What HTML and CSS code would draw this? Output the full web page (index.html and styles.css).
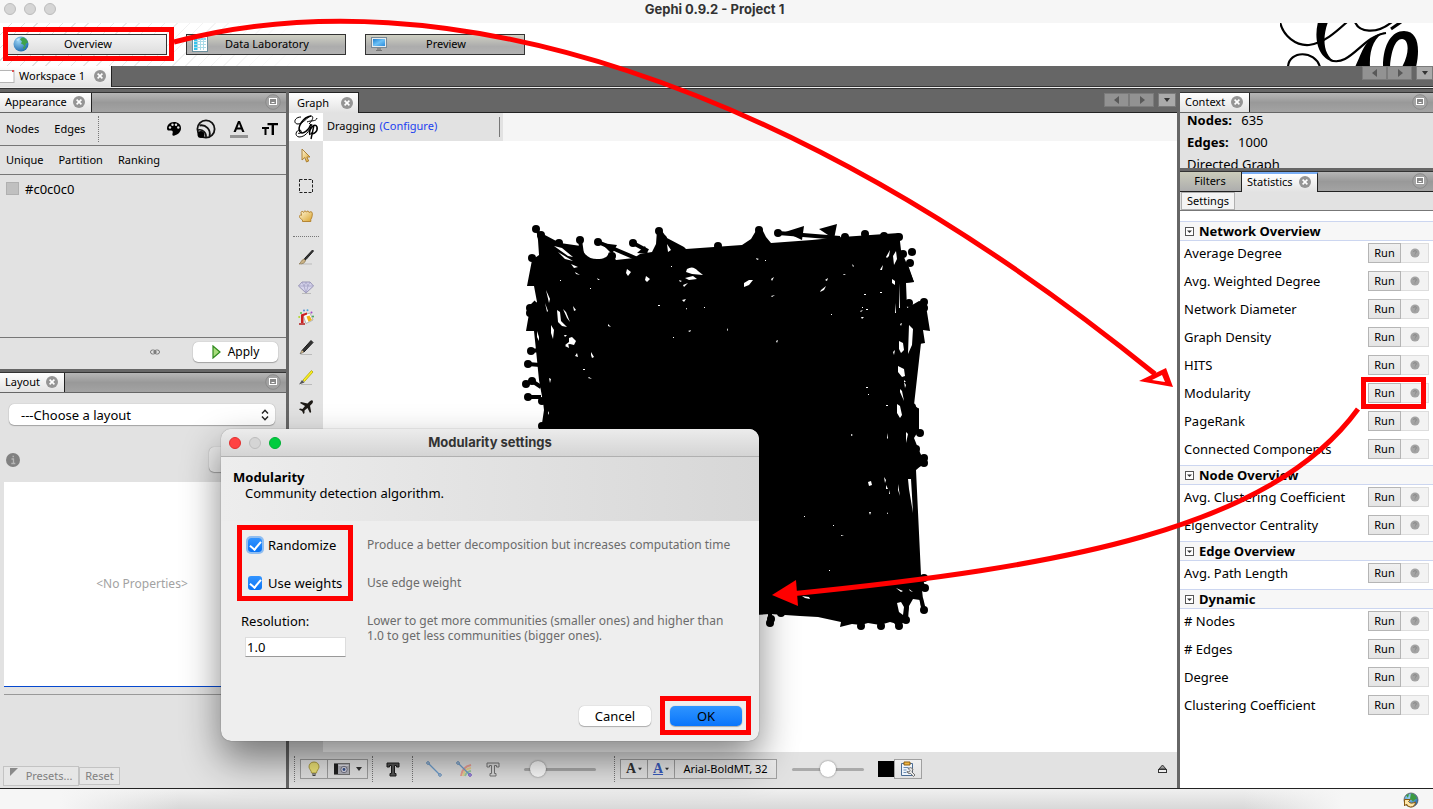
FILE: index.html
```html
<!DOCTYPE html>
<html lang="en">
<head>
<meta charset="utf-8">
<title>Gephi 0.9.2 - Project 1</title>
<link rel="stylesheet" href="styles.css">
</head>
<body>
<svg class="defs" aria-hidden="true">
  <defs>
    <linearGradient id="gold" x1="0" y1="0" x2="1" y2="1"><stop offset="0" stop-color="#fff6d8"/><stop offset="1" stop-color="#d9a32c"/></linearGradient>
    <radialGradient id="globeFill" cx=".35" cy=".3" r=".8"><stop offset="0" stop-color="#9ad4f5"/><stop offset="1" stop-color="#1461a8"/></radialGradient>
    <linearGradient id="screen" x1="0" y1="0" x2="1" y2="1"><stop offset="0" stop-color="#1d7fd0"/><stop offset=".5" stop-color="#6cc0f5"/><stop offset="1" stop-color="#2a8bdc"/></linearGradient>
    <symbol id="close" viewBox="0 0 12 12"><circle cx="6" cy="6" r="6" fill="#959595"/><path d="M3.6 3.6l4.8 4.8M8.4 3.6l-4.8 4.8" stroke="#fff" stroke-width="1.6"/></symbol>
    <symbol id="mini" viewBox="0 0 16 16"><circle cx="8" cy="8" r="7.3" fill="#a2a2a2" stroke="#8a8a8a"/><rect x="4.5" y="4.5" width="7" height="6" fill="#888" stroke="#fff"/><path d="M6.5 8.5h3" stroke="#fff"/></symbol>
    <symbol id="help" viewBox="0 0 10 10"><circle cx="5" cy="5" r="4.6" fill="#a3a3a3"/><path d="M3.6 4q0-1.4 1.4-1.4T6.4 4Q6.4 4.800 5 5.600M5 6.500v1" fill="none" stroke="#8a8a8a"/></symbol>
    <symbol id="left" viewBox="0 0 6 8"><path d="M5 0v8L0 4z" fill="#595959"/></symbol>
    <symbol id="right" viewBox="0 0 6 8"><path d="M1 0v8l5-4z" fill="#595959"/></symbol>
    <symbol id="down" viewBox="0 0 6 6"><path d="M0 1h6L3 5z" fill="#333"/></symbol>
    <symbol id="fold" viewBox="0 0 9 9"><rect x=".5" y=".5" width="8" height="8" fill="#fff" stroke="#555"/><path d="M2 3.500h5L4.500 6z" fill="#333"/></symbol>
  </defs>
</svg>

<div class="window">
  <header class="titlebar">
    <div class="lights"><span></span><span></span><span></span></div>
    <h1>Gephi 0.9.2 - Project 1</h1>
  </header>

  <nav class="perspectives">
    <button class="persp current" type="button">
      <svg viewBox="0 0 16 16" width="16" height="16"><circle cx="8" cy="8" r="7.500" fill="url(#globeFill)"/><path d="M9 1.500c3 0 5 2 6 5l-2 1-1 3-2-2-2-1 1-2-2-2zM10 11l3-1-2 4z" fill="#3fa24a"/><path d="M3 4l3-2 1 1-2 2z" fill="#bfe4fa"/></svg>
      <span>Overview</span>
    </button>
    <button class="persp" type="button">
      <svg viewBox="0 0 16 16" width="16" height="16"><rect x=".5" y=".5" width="15" height="15" fill="#fff" stroke="#6b8f9c"/><path d="M2 2h3v12H2z" fill="#35c4ec"/><path d="M5 2h9v2H5z" fill="#7fdcf5"/><path d="M2 5.500h12M2 8.500h12M2 11.500h12M5.500 2v12M8.500 2v12M11.500 2v12" stroke="#a9dbe8" fill="none"/></svg>
      <span>Data Laboratory</span>
    </button>
    <button class="persp" type="button">
      <svg viewBox="0 0 16 16" width="16" height="16"><rect x=".5" y="1.500" width="15" height="10" fill="#e8ecee" stroke="#7a8a96"/><rect x="2" y="3" width="12" height="7" fill="url(#screen)"/><path d="M6 12h4v2H6z" fill="#8b8b8b"/><path d="M5 14.500h6" stroke="#777"/></svg>
      <span>Preview</span>
    </button>
    <svg class="brand" viewBox="1280 23 140 43" aria-hidden="true">
      <g fill="none" stroke="#000" stroke-width="2.200">
        <path d="M1280 22C1283 36 1296 46 1309 45C1324 43 1336 32 1347 22"/>
        <path d="M1288 67C1289 50 1315 50 1320 67"/>
        <path d="M1355 22C1359 32 1376 35 1392 22"/>
        <path d="M1391 29L1401 22" stroke-width="3"/>
        <path d="M1330 60C1350 68 1362 36 1386 33"/>
      </g>
      <path d="M1318 22h10C1322 38 1323 56 1336 62C1320 61 1313 42 1318 22z"/>
      <path d="M1386 32C1374 36 1369 50 1370 67h-15C1362 54 1364 36 1386 32z"/>
      <path d="M1383 67C1383 44 1392 31 1404 31C1419 31 1420 50 1416 67h-14C1410 53 1409 39 1402 39C1395 39 1391 52 1390 67z"/>
    </svg>
  </nav>

  <div class="workspaces">
    <div class="tab ws"><svg viewBox="0 0 15 13" width="15" height="13"><rect x="-2" y=".5" width="16" height="12" fill="#fff" stroke="#b5b5b5"/><rect x="12" y="0" width="2" height="2" fill="#d55"/></svg>Workspace 1<svg class="x"><use href="#close"/></svg></div>
    <div class="navs">
      <button type="button" aria-label="Previous workspace"><svg width="6" height="8"><use href="#left"/></svg></button><button type="button" aria-label="Next workspace"><svg width="6" height="8"><use href="#right"/></svg></button><button class="drop" type="button" aria-label="Workspaces"><svg width="6" height="6"><use href="#down"/></svg></button>
    </div>
  </div>

  <main class="desk">
    <div class="col">
      <section class="panel appearance">
        <div class="head"><div class="tab">Appearance<svg class="x"><use href="#close"/></svg></div><svg class="mini"><use href="#mini"/></svg></div>
        <div class="modes">
          <a href="#">Nodes</a><a href="#">Edges</a><i class="dots"></i>
          <div class="kinds">
            <svg viewBox="0 0 16 16" width="16" height="16"><path d="M8 1C3.500 1 1 4 1 7.500C1 10 3 9.500 5 9.500C7 9.500 7 11 6.500 12.500C6 14.500 7 15 8.500 14.500C12 13.500 15 11 15 7C15 3.500 12 1 8 1z"/><g fill="#e2e2e2"><circle cx="4" cy="6.500" r="1.200"/><circle cx="6.500" cy="3.800" r="1.200"/><circle cx="10" cy="3.800" r="1.200"/><circle cx="12.300" cy="6.500" r="1.200"/></g></svg>
            <svg viewBox="0 0 20 20" width="20" height="20"><g fill="none" stroke="#111" stroke-width="1.800"><circle cx="10" cy="10" r="8.600"/><path d="M3.500 6.500a8.500 8.500 0 0 1 10 10.500"/></g><path d="M2 11a6.500 6.500 0 0 1 8 7.500" fill="none" stroke="#111" stroke-width="1.500"/><circle cx="5" cy="15.500" r="3.500"/></svg>
            <svg viewBox="0 0 18 18" width="18" height="18"><path d="M3.500 12L8 1h2l4.500 11h-2.300l-1-2.600H6.800l-1 2.600zM7.500 7.500h3L9 3.500z"/><path d="M0 15h18v3H0z" fill="#949494"/></svg>
            <svg viewBox="0 0 16 14" width="16" height="14"><path d="M0 5h7v2H4.500v6h-2V7H0zM5.500 1H16v2.200h-4V13H9.600V3.200H5.500z"/></svg>
          </div>
        </div>
        <div class="modes second"><a href="#">Unique</a><a href="#">Partition</a><a href="#">Ranking</a></div>
        <div class="swatch"><i></i>#c0c0c0</div>
        <div class="applybar">
          <svg viewBox="0 0 10 7" width="10" height="7"><g fill="none" stroke="#777"><rect x=".5" y="1" width="5" height="4" rx="2"/><rect x="4.500" y="1" width="5" height="4" rx="2"/><path d="M3 3h4"/></g></svg>
          <button class="mac" type="button"><svg viewBox="0 0 9 14" width="9" height="14"><path d="M1 1l7 6-7 6z" fill="#a8dc7c" stroke="#2f8a1e" stroke-width="1.200"/></svg>Apply</button>
        </div>
      </section>
      <section class="panel layout">
        <div class="head"><div class="tab">Layout<svg class="x"><use href="#close"/></svg></div><svg class="mini"><use href="#mini"/></svg></div>
        <div class="picker"><select aria-label="Layout"><option>---Choose a layout</option></select><svg viewBox="0 0 8 12" width="8" height="12"><path d="M1 4.500L4 1.300l3 3.200M1 7.500l3 3.200 3-3.200" fill="none" stroke="#222" stroke-width="1.400"/></svg></div>
        <div class="runrow"><svg viewBox="0 0 14 14" width="14" height="14"><circle cx="7" cy="7" r="7" fill="#818181"/><path d="M5.500 6h2v4.500M5.300 10.500h4M6.500 3.500h1.500" stroke="#b5b5b5" stroke-width="1.300" fill="none"/></svg><button class="mac off" type="button" aria-label="Run layout"></button></div>
        <div class="props">&lt;No Properties&gt;</div>
        <div class="desc"></div>
        <div class="presets"><button type="button" disabled><svg viewBox="0 0 8 8" width="8" height="8"><path d="M0 0h8L0 8z" fill="#8a8a8a"/></svg>Presets...</button><button type="button" disabled>Reset</button></div>
      </section>
    </div>

    <section class="graph">
      <div class="head plain"><div class="tab">Graph<svg class="x"><use href="#close"/></svg></div>
        <div class="navs"><button type="button" aria-label="Previous tab"><svg width="6" height="8"><use href="#left"/></svg></button><button type="button" aria-label="Next tab"><svg width="6" height="8"><use href="#right"/></svg></button><button class="drop" type="button" aria-label="Tabs"><svg width="6" height="6"><use href="#down"/></svg></button></div>
      </div>
      <div class="dragbar">
        <svg class="gp" viewBox="0 0 34 28" width="34" height="28"><g fill="none" stroke="#000" stroke-width="1"><path d="M12 4C5 4 4 11 9 11C14 11 18 4 22 3C25 3 24 7 20 11"/><path d="M22 3C14 4 8 14 11 19C14 22 20 17 22 11" stroke-width="1.500"/><path d="M23 11C20 19 16 24 10 24C5 23 7 17 11 17C14 18 11 22 9 20"/><path d="M21 22C19 16 26 9 28 14C29 18 25 22 22 20" stroke-width="1.600"/><path d="M25 12L22 26" stroke-width="1.400"/><path d="M18 9C22 7 27 9 28 5"/></g></svg>
        <div class="drag"><span>Dragging</span><a href="#">(Configure)</a><i></i></div>
      </div>
      <div class="stage">
        <div class="tools">
          <button type="button" aria-label="Select"><svg viewBox="0 0 16 16" width="16" height="16"><path d="M4 1v11l2.800-2.500L8.500 14l2.200-1-1.800-4H12z" fill="url(#gold)" stroke="#a6782a" stroke-width=".9"/></svg></button>
          <button type="button" aria-label="Rectangle selection"><svg viewBox="0 0 16 16" width="16" height="16"><rect x="1.500" y="1.500" width="13" height="13" fill="none" stroke="#222" stroke-dasharray="3 1.500"/></svg></button>
          <button type="button" aria-label="Drag"><svg viewBox="0 0 16 16" width="16" height="16"><path d="M4.500 13.500V12C3 11 1.500 10 1.500 8.500C1.500 7 2.500 6.800 3.500 7.300L3 4.500C3.300 3 5 3 5.600 4.500C5.800 2.500 8 2.500 8.400 4.200C8.800 2.600 11 2.700 11.200 4.600C12 3.200 14.300 3.500 14.300 5.300C14.300 8 14 9.500 12.800 11.500V13.500z" fill="url(#gold)" stroke="#b07d27" stroke-width=".9"/></svg></button>
          <i></i>
          <button type="button" aria-label="Painter"><svg viewBox="0 0 16 16" width="16" height="16"><path d="M3 15h11" stroke="#bbb"/><path d="M14.500 1L7 9l-1.500 3L8 10.500 15.500 2z" fill="#333" stroke="#222"/><path d="M6 10C3 11 3 14 1 15c4 0 6-1 6.500-3.500z" fill="#c9b184" stroke="#7d6b45" stroke-width=".6"/></svg></button>
          <button type="button" aria-label="Sizer"><svg viewBox="0 0 16 16" width="16" height="16"><path d="M4 14.500h9" stroke="#bbb"/><path d="M4 3h8l3.500 4L8 14 .5 7z" fill="#d6d4ec" stroke="#8884aa" stroke-width=".8"/><path d="M.5 7h15M4 3l2 4 2 7 2-7 2-4M6 7l2-4 2 4" fill="none" stroke="#a5a2c4" stroke-width=".8"/></svg></button>
          <button type="button" aria-label="Brush"><svg viewBox="0 0 16 16" width="16" height="16"><circle cx="3" cy="4" r="1" fill="#4ac54a"/><circle cx="6" cy="1.500" r="1" fill="#5588d8"/><circle cx="9.500" cy="1.200" r="1" fill="#4ba8d8"/><circle cx="13.500" cy="3.500" r="1" fill="#a345c8"/><circle cx="15" cy="7.500" r="1" fill="#38a858"/><circle cx="1.200" cy="8" r="1" fill="#b0d82a"/><path d="M5 6l7-2 3 7-7 3.500z" fill="#fafafa" stroke="#999" stroke-width=".7"/><path d="M3 5.500l6-2v2L5.500 7v7H3z" fill="#cc1f1f"/><path d="M8.500 7.500l3-1L14 11l-3.500 1.800z" fill="#eeb21c"/><path d="M1 15h6" stroke="#b51b1b" stroke-width="1.500"/></svg></button>
          <button type="button" aria-label="Node pencil"><svg viewBox="0 0 16 16" width="16" height="16"><path d="M3 15.500h11" stroke="#bbb"/><path d="M4 11.500L13 1.500l2 2L6 13z" fill="#333" stroke="#1c1c1c"/><path d="M4 11l2 2-4 2z" fill="#dcbf8a" stroke="#444" stroke-width=".5"/></svg></button>
          <button type="button" aria-label="Edge pencil"><svg viewBox="0 0 16 16" width="16" height="16"><path d="M3 15.500h11" stroke="#bbb"/><path d="M5 11L13.500 1.500l1.500 1.500L6.500 12.500z" fill="#fbf01c" stroke="#b3a80c" stroke-width=".8"/><path d="M4 11l2.500 2.500L1 15.500z" fill="#555"/></svg></button>
          <button type="button" aria-label="Shortest path"><svg viewBox="0 0 16 16" width="16" height="16"><path d="M14.500 1.500c-1-.8-2 0-3 1L9.500 4.500 3 3 2 4l5 3-2.500 3L2 9.500 1 10.500l3 1.500 1.500 3 1-1L6.500 11.500 9.500 9l2.500 5 1.200-1L12 6.800l2-2c1-1 1.300-2.500.5-3.300z" fill="#1d1a16"/></svg></button>
        </div>
        <svg class="net" viewBox="323 141 854 611" preserveAspectRatio="xMidYMid slice" role="img" aria-label="Network graph">
          <path d="M536 229L543 234L560 243L581 246C584 256 590 259 597 259C606 259 608 256 609 252L613 256L616 260L634 258L640 254L652 252L656 244L657 230L662 231L667 238L684 247L686 249L742 245L751 239L757 229H762L766 237L771 243L812 240L842 237L899 233L901 250L906 262L914 282L906 283L907 308L919 301L924 302L927 312L930 331L923 330L925 343L921 343L914 405L919 409V430L914 438L918 448L922 457L922 465L916 470L921 575L926 588L922 590L924 608H921L920 600L913 599L909 606L907 618L901 625L890 622L880 625L868 623L861 625L852 624L840 627L841 622L818 617L800 616L770 614L755 615L600 600L541 430L544 410L543 402L539 380L536 350L534 331H526L530 308L537 302L534 286H527L532 260L539 255L538 240z"/>
          <g stroke="#000" stroke-width="4" fill="none"><path d="M598 242L640 260M633 243L648 251M580 240L582 254M778 233L840 238M528 364L540 365M526 384L532 381L541 387M528 397L541 397M530 308L536 302M531 351L540 350M909 303L900 303M924 463L914 466M906 620L907 606M899 627L888 610M924 610L921 598M770 622V614"/></g>
          <path d="M601 243L617 245L612 254zM645 246L648 254L637 253zM785 232L804 226L802 240zM819 229L837 224L834 239zM907 262L914 282L900 283zM920 340L925 343L914 345zM914 412L919 408V430z"/>
          <g>
            <circle cx="536" cy="229" r="4"/><circle cx="541" cy="235" r="4"/><circle cx="559" cy="243" r="4"/><circle cx="580" cy="240" r="4"/><circle cx="598" cy="242" r="4"/><circle cx="633" cy="243" r="4"/><circle cx="612" cy="256" r="4"/><circle cx="659" cy="231" r="4"/><circle cx="663" cy="239" r="4"/><circle cx="532" cy="258" r="4"/><circle cx="530" cy="308" r="4"/><circle cx="530" cy="313" r="4"/><circle cx="531" cy="351" r="4"/><circle cx="528" cy="364" r="4"/><circle cx="526" cy="384" r="4"/><circle cx="532" cy="381" r="4"/><circle cx="528" cy="397" r="4"/><circle cx="542" cy="426" r="4"/><circle cx="542" cy="401" r="4"/><circle cx="718" cy="246" r="4"/><circle cx="759" cy="230" r="4"/><circle cx="778" cy="233" r="4"/><circle cx="845" cy="237" r="4"/><circle cx="865" cy="234" r="4"/><circle cx="884" cy="236" r="4"/><circle cx="899" cy="237" r="4"/><circle cx="903" cy="254" r="4"/><circle cx="912" cy="252" r="4"/><circle cx="910" cy="263" r="4"/><circle cx="909" cy="303" r="4"/><circle cx="924" cy="302" r="4"/><circle cx="924" cy="308" r="4"/><circle cx="910" cy="350" r="4"/><circle cx="912" cy="407" r="4"/><circle cx="920" cy="433" r="4"/><circle cx="916" cy="449" r="4"/><circle cx="924" cy="458" r="4"/><circle cx="924" cy="463" r="4"/><circle cx="924" cy="578" r="4"/><circle cx="925" cy="588" r="4"/><circle cx="924" cy="610" r="4"/><circle cx="906" cy="620" r="4"/><circle cx="899" cy="626" r="4"/><circle cx="881" cy="626" r="4"/><circle cx="861" cy="626" r="4"/><circle cx="770" cy="623" r="4"/><circle cx="771" cy="619" r="4"/><circle cx="781" cy="613" r="4"/>
          </g>
          <g fill="#fff">
            <path d="M554 246l8 2 11 9-5-1zM558 252l10 6 5 3-8-2zM571 264l7 3-4 1zM575 272l5 3-4-1zM627 269l4 3-3 4-2-3zM646 276l4 3-3 3-2-2zM687 269q6-4 11 2l5 4-11-1-6-2zM685 278l8-2 4 3-8 1zM683 285l5-2-4 4zM744 283l5-3h4l-4 5-5 2zM771 279l3-2-2 4zM771 296l4-1-3 2zM821 290l5-4-2 4-4 2zM825 280l3-2-1 3zM667 244l4 6-3 2zM546 290l4 9-1 4zM545 303l3 8-1 1zM557 310l3 2 1 9 6 6-5-1-4-4zM563 309l3 3 4 10-3-4zM551 325l3 5-1 9-2-6zM573 306l3 4-2 1zM569 338l3-1 4 4-2 4-4-1-5 1 4-3zM565 346l3-3 1 5zM591 352l3 5-2 1-1-3zM575 356l2-3 1 4zM589 377l3 2-4-1zM608 324l3 3-3-1zM549 378l2 1-1 4zM548 411l1 2-1 2zM537 331l2 6v4l-2-4zM597 278l3 2-2 0zM682 300l4-1-2 3zM686 308h1v2zM658 305h2v1h-2zM688 331l3-1-1 2zM727 328l1 2-1 1zM776 341l2-1-1 3zM860 311l3-1-2 2zM861 317l3 0-2 2zM866 333l2 1zM886 257l4-7-1 6-2 2zM881 268l2-3-1 5-2 0zM893 256l3-5 1 8-3 6zM892 279l3 2 0 4-3-2zM899 283l1 25h-1zM895 303l1 10h-1zM900 324l2-1-1 3zM893 352l2-2-1 5zM899 341l4 2 1 7-3 3-2-4zM898 366l6 3 1 7-3 1-4-5zM904 380l2 2h-2zM900 389l2 2 2 10-4-9zM897 404l3 2 2 9-2 3-3-5zM909 325l4 4-1 16-4 9zM904 382l2 3-1 3z"/>
            <path d="M851 434l2 1-2 1zM887 433l1 5-1 1zM906 432l2 2-2 9zM860 468l3-1-3 1zM868 482l3-1 1 4-3 1zM884 477l2 3-1 3zM886 485l2 4h-2zM889 490l1 4h-1zM898 484l2 12-2-6zM908 479h3l2 34-4-24zM869 512h2l-1 3zM887 512l1 2h-1zM841 535l3 1-3 0zM802 596l7 1 1 2-5-1zM896 588l7 3-2 1zM909 589l4 3-3-1zM829 570h1v1h-1zM804 516h1v1h-1zM833 525h1v1h-1z"/>
            <path d="M560 280h1v1h-1zM590 288h1v1h-1zM671 266h1v1h-1zM679 280l3 1-2 1zM756 258l3 1-2 1zM765 260h1v1h-1zM852 264l2 2-1 1zM843 274l3 0-2 1zM864 294h2v1h-2zM862 307h1v1h-1zM866 309h2v1h-2zM880 292h2v1h-2zM831 314h1v1h-1zM866 387h2v1h-2zM868 394h1v1h-1zM886 405h2v1h-2zM583 369h2v1h-2zM673 337h1v1h-1zM704 307h1v1h-1zM564 335l3 0-2 2z"/>
            <path d="M899 612L897 603L901 602L904 607L903 615z"/>
          </g>
        </svg>
      </div>
      <div class="viewbar">
        <i class="dots"></i>
        <button class="cell" type="button" aria-label="Background"><svg viewBox="0 0 14 16" width="14" height="16"><path d="M7 1C3.500 1 2 3.500 2 6c0 2 2.500 3.500 2.500 6h5c0-2.500 2.500-4 2.500-6 0-2.500-1.500-5-5-5z" fill="#f4e97a" stroke="#a8973a" stroke-width=".9"/><path d="M5 13h4M5.500 14.500h3" stroke="#444" stroke-width="1.200"/></svg></button><button class="cell wide" type="button" aria-label="Screenshot"><svg viewBox="0 0 16 12" width="16" height="12"><rect x=".5" y=".5" width="15" height="11" fill="#b6b6bd" stroke="#777"/><rect x="0" y="1" width="4" height="10" fill="#222"/><path d="M4.500 2.500h10" stroke="#e4e4ea"/><circle cx="10" cy="6.500" r="3.200" fill="#dcdce8" stroke="#778"/><circle cx="10" cy="6.500" r="1.400" fill="#35508e"/></svg><svg width="6" height="6"><use href="#down"/></svg></button>
        <i class="dots gap"></i>
        <svg class="bigt" viewBox="0 0 14 15" width="14" height="15"><path d="M1 1h12v4h-2.500V3.500h-2v8H10V14H4v-2.500h1.500v-8h-2V5H1z" fill="#555" stroke="#1c1c1c"/></svg>
        <i class="dots gap2"></i>
        <svg viewBox="0 0 16 16" width="16" height="16"><path d="M2 2l12 12" stroke="#6d9fd0" stroke-width="1.200"/><circle cx="2" cy="2" r="1.300" fill="#e2e2e2" stroke="#5a8cc0"/><circle cx="14" cy="14" r="1.300" fill="#e2e2e2" stroke="#5a8cc0"/></svg>
        <svg viewBox="0 0 16 16" width="16" height="16"><g fill="none" stroke-width="2"><path d="M5 15Q6 6 15 4" stroke="#eda095"/><path d="M7 15Q8 8 15 7" stroke="#edd58f"/><path d="M9 15Q10 11 15 10" stroke="#9dcca3"/></g><path d="M2 2l12 12" stroke="#6d9fd0" stroke-width="1.200"/><circle cx="2" cy="2" r="1.300" fill="#e2e2e2" stroke="#5a8cc0"/><circle cx="14" cy="14" r="1.300" fill="#e2e2e2" stroke="#64c"/></svg>
        <svg viewBox="0 0 14 15" width="14" height="15"><path d="M1 1h12v4h-2.500V3.500h-2v8H10V14H4v-2.500h1.500v-8h-2V5H1z" fill="#ddd" stroke="#777"/></svg>
        <input class="r1" type="range" min="0" max="100" value="10" aria-label="Edge weight scale">
        <i class="dots gap3"></i>
        <button class="cell serif" type="button">A<svg width="4" height="4"><use href="#down"/></svg></button><button class="cell serif blue" type="button">A<svg width="4" height="4"><use href="#down"/></svg></button><button class="cell font" type="button">Arial-BoldMT, 32</button>
        <input class="r2" type="range" min="0" max="100" value="50" aria-label="Label size">
        <button class="ink" type="button" aria-label="Label colour"></button><button class="cell" type="button" aria-label="Label attributes"><svg viewBox="0 0 16 16" width="16" height="16"><path d="M1.500 2.500h11v12h-11z" fill="#eef4fb" stroke="#4b6c94"/><path d="M4 1h6v3H4z" fill="#f0b640" stroke="#8c5e12"/><path d="M3.500 6.500h5M3.500 9h3M3.500 11.500h3" stroke="#6b8db3"/><path d="M8 7.500q3-2 5 .5l-1 3 3 3-1.500 1.500-3-3q-3 .5-3.500-2l2 .5 1-1.500z" fill="#e8e8e8" stroke="#555" stroke-width=".8"/></svg></button>
        <svg class="eject" viewBox="0 0 9 10" width="9" height="10"><path d="M4.500 1L8 5H1z" fill="#999" stroke="#333"/><rect x=".5" y="5.500" width="8" height="3" fill="#eee" stroke="#333"/></svg>
      </div>
    </section>

    <div class="col">
      <section class="panel context">
        <div class="head"><div class="tab">Context<svg class="x"><use href="#close"/></svg></div><svg class="mini"><use href="#mini"/></svg></div>
        <div class="facts"><p><b>Nodes:</b> 635</p><p><b>Edges:</b> 1000</p><p>Directed Graph</p></div>
      </section>
      <section class="panel stats">
        <div class="head dark"><div class="tab idle">Filters</div><div class="tab on">Statistics<svg class="x"><use href="#close"/></svg></div><svg class="mini"><use href="#mini"/></svg></div>
        <div class="settings"><button type="button">Settings</button></div>
        <div class="list">
          <h2><svg width="9" height="9"><use href="#fold"/></svg>Network Overview</h2>
          <ul>
            <li><span>Average Degree</span><button type="button">Run</button><button class="q" type="button" aria-label="Help"><svg width="10" height="10"><use href="#help"/></svg></button></li>
            <li><span>Avg. Weighted Degree</span><button type="button">Run</button><button class="q" type="button" aria-label="Help"><svg width="10" height="10"><use href="#help"/></svg></button></li>
            <li><span>Network Diameter</span><button type="button">Run</button><button class="q" type="button" aria-label="Help"><svg width="10" height="10"><use href="#help"/></svg></button></li>
            <li><span>Graph Density</span><button type="button">Run</button><button class="q" type="button" aria-label="Help"><svg width="10" height="10"><use href="#help"/></svg></button></li>
            <li><span>HITS</span><button type="button">Run</button><button class="q" type="button" aria-label="Help"><svg width="10" height="10"><use href="#help"/></svg></button></li>
            <li><span>Modularity</span><button type="button">Run</button><button class="q" type="button" aria-label="Help"><svg width="10" height="10"><use href="#help"/></svg></button></li>
            <li><span>PageRank</span><button type="button">Run</button><button class="q" type="button" aria-label="Help"><svg width="10" height="10"><use href="#help"/></svg></button></li>
            <li><span>Connected Components</span><button type="button">Run</button><button class="q" type="button" aria-label="Help"><svg width="10" height="10"><use href="#help"/></svg></button></li>
          </ul>
          <h2><svg width="9" height="9"><use href="#fold"/></svg>Node Overview</h2>
          <ul>
            <li><span>Avg. Clustering Coefficient</span><button type="button">Run</button><button class="q" type="button" aria-label="Help"><svg width="10" height="10"><use href="#help"/></svg></button></li>
            <li><span>Eigenvector Centrality</span><button type="button">Run</button><button class="q" type="button" aria-label="Help"><svg width="10" height="10"><use href="#help"/></svg></button></li>
          </ul>
          <h2><svg width="9" height="9"><use href="#fold"/></svg>Edge Overview</h2>
          <ul>
            <li><span>Avg. Path Length</span><button type="button">Run</button><button class="q" type="button" aria-label="Help"><svg width="10" height="10"><use href="#help"/></svg></button></li>
          </ul>
          <h2><svg width="9" height="9"><use href="#fold"/></svg>Dynamic</h2>
          <ul>
            <li><span># Nodes</span><button type="button">Run</button><button class="q" type="button" aria-label="Help"><svg width="10" height="10"><use href="#help"/></svg></button></li>
            <li><span># Edges</span><button type="button">Run</button><button class="q" type="button" aria-label="Help"><svg width="10" height="10"><use href="#help"/></svg></button></li>
            <li><span>Degree</span><button type="button">Run</button><button class="q" type="button" aria-label="Help"><svg width="10" height="10"><use href="#help"/></svg></button></li>
            <li><span>Clustering Coefficient</span><button type="button">Run</button><button class="q" type="button" aria-label="Help"><svg width="10" height="10"><use href="#help"/></svg></button></li>
          </ul>
        </div>
      </section>
    </div>
  </main>

  <footer class="status"><svg viewBox="0 0 16 16" width="16" height="16"><circle cx="8" cy="8" r="7" fill="url(#globeFill)" stroke="#555" stroke-width=".8"/><path d="M8 1.500c3 0 5 2 6 5l-2 1-2 2-3-3zM3 3l3-1-1 4z" fill="#3d9a3f"/><path d="M1.500 7.500h6L5.500 9.500q2 3 7 .5-.5 5-5 5Q4 14.500 3.500 12L1.500 14z" fill="#fde6a8" stroke="#8a5a10"/></svg></footer>
</div>

<form class="dialog" role="dialog" aria-labelledby="dlg-title">
  <div class="dlg-bar"><div class="lights"><span class="red"></span><span></span><span class="green"></span></div><h2 id="dlg-title">Modularity settings</h2></div>
  <div class="dlg-head"><b>Modularity</b><p>Community detection algorithm.</p></div>
  <div class="dlg-body">
    <label class="check"><input class="focus" type="checkbox" checked>Randomize</label>
    <p>Produce a better decomposition but increases computation time</p>
    <label class="check"><input type="checkbox" checked>Use weights</label>
    <p>Use edge weight</p>
    <div class="res"><label for="res">Resolution:</label><input id="res" type="text" value="1.0"></div>
    <p class="two">Lower to get more communities (smaller ones) and higher than 1.0 to get less communities (bigger ones).</p>
  </div>
  <div class="dlg-actions"><button class="mac" type="button">Cancel</button><button class="mac ok" type="button">OK</button></div>
</form>

<svg class="marks" viewBox="0 0 1433 809" width="1433" height="809" aria-hidden="true">
  <g fill="none" stroke="#f00" stroke-width="5">
    <rect x="5.500" y="29.500" width="166" height="29"/>
    <rect x="1363.500" y="379.500" width="60" height="27"/>
    <rect x="239.500" y="527.500" width="111" height="71"/>
    <rect x="662.500" y="698.500" width="86" height="34"/>
    <path d="M174 42C440 -28 790 78 1155 374"/>
    <path d="M1358 409C1270 530 1060 567 790 594"/>
  </g>
  <path d="M1139 381L1166 368L1173 387zM1152 380L1165 382L1162 375z" fill="#f00" fill-rule="evenodd"/>
  <path d="M772 595L796 580L798 606z" fill="#f00"/>
</svg>
</body>
</html>
```
FILE: styles.css
```css
* { box-sizing: border-box; }

body {
  margin: 0;
  height: 100vh;
  position: relative;
  overflow: hidden;
  font: 11px/16px "Lucida Grande", "Noto Sans", "Open Sans", sans-serif;
  color: #000;
}

h1, h2, p, ul { margin: 0; padding: 0; }
ul { list-style: none; }
a { color: inherit; text-decoration: none; }
button, input, select { font: inherit; color: inherit; margin: 0; }
button { display: flex; align-items: center; justify-content: center; padding: 0; border-radius: 0; white-space: nowrap; }
svg { display: block; flex: none; }
.defs { position: absolute; width: 0; height: 0; }

.window { display: flex; flex-direction: column; height: 100%; background: #666; }

/* title bar */
.titlebar { position: relative; height: 23px; background: #f6f6f6; display: flex; align-items: center; justify-content: center; padding: 0 4px 6px 0; flex: none; }
.titlebar h1, .dlg-bar h2 { font: bold 13px/16px Inter, "Liberation Sans", sans-serif; color: #333; }
.lights { position: absolute; left: 4px; top: 3px; display: flex; gap: 8px; }
.lights span { width: 12px; height: 12px; border-radius: 50%; background: #d5d5d5; border: 1px solid #bcbcbc; }
.lights .red { background: #ff4343; border-color: #e0302f; }
.lights .green { background: #00cc3f; border-color: #00b035; }

/* perspective switcher */
.perspectives {
  height: 43px; flex: none; display: flex; align-items: center; gap: 19px; padding-left: 7px;
  background: linear-gradient(90deg, rgba(255,255,255,0), #fff 320px), repeating-linear-gradient(135deg, #fff 0 8px, #ddd 8px 9px);
}
.persp { width: 160px; height: 21px; border: 1px solid #333; background: linear-gradient(#cfd0c3, #acacac 60%, #b3b3b3); padding: 0 5px 1px; }
.persp.current { background: linear-gradient(#f4f4f4, #dedede); }
.persp span { flex: 1; padding-right: 14px; }
.brand { width: 140px; height: 43px; margin: 0 13px 0 auto; }

/* tabs */
.workspaces { height: 23px; flex: none; display: flex; justify-content: space-between; border-bottom: 1px solid #333; box-shadow: inset 0 -1px #eee, inset 0 -2px #333; }
.tab { display: flex; align-items: center; gap: 6px; padding: 0 6px 1px 5px; background: linear-gradient(#fff, #e2e2e2); border-right: 1px solid #222; }
.tab .x { width: 12px; height: 12px; }
.ws { height: 21px; width: 112px; padding: 0 0 1px; gap: 4px; }
.ws .x { margin-left: 5px; }
.navs { display: flex; height: 14px; }
.navs button { width: 25px; height: 14px; border: 1px solid #7b7b7b; background: #929292; }
.navs .drop { width: 18px; margin-left: 4px; background: #aaa; }
.workspaces .drop { width: 17px; }

.head { height: 21px; flex: none; display: flex; border-top: 1px solid #333; border-bottom: 1px solid #666; background: linear-gradient(#b6b6b6, #999 50%, #a3a3a3); }
.head.dark { border-bottom-color: #222; }
.head.plain { background: #666; border-top-color: #666; border-bottom-color: #222; }
.head.plain .tab { border-top: 1px solid #222; margin: -1px 0; width: 70px; padding: 0 0 1px 8px; gap: 12px; background: linear-gradient(#fff, #e2e2e2); }
.head.plain .navs { margin-left: auto; margin-right: 1px; }
.mini { width: 16px; height: 16px; margin: 1px 5px 0 auto; }
.tab.idle { width: 62px; justify-content: center; background: linear-gradient(#cbccbb, #adadad); }
.tab.on { border-top: 2px solid #7aaef5; margin-bottom: -1px; padding-bottom: 2px; background: linear-gradient(#fff, #e2e2e2); }

/* main columns */
.desk { flex: 1; min-height: 0; display: grid; grid-template-columns: 286px minmax(0, 1fr) 253px; gap: 3px; padding-top: 3px; border-bottom: 1px solid #222; }
.col { display: flex; flex-direction: column; gap: 3px; min-height: 0; }
.panel { background: #e2e2e2; display: flex; flex-direction: column; min-height: 0; }

.appearance { height: 277px; flex: none; }
.modes { display: flex; align-items: center; gap: 15px; height: 33px; padding-left: 6px; border-bottom: 1px solid #777; }
.modes.second { height: 29px; }
.dots { width: 1px; align-self: stretch; margin: 3px 0; border-left: 1px dotted #777; }
.modes .dots { margin-left: -2px; }
.kinds { margin: 0 8px 0 auto; display: flex; align-items: center; gap: 14px; }
.swatch { flex: 1; display: flex; gap: 6px; padding: 6px; font-size: 13px; }
.swatch i { width: 13px; height: 13px; margin-top: 1px; background: silver; border: 1px solid #b0b0b0; }
.applybar { display: flex; align-items: center; justify-content: flex-end; gap: 33px; height: 32px; padding: 0 8px 3px 0; border-top: 1px solid #777; }
.mac { height: 20px; border: 0; border-radius: 5px; background: #fff; box-shadow: 0 0 1px rgba(0,0,0,.35), 0 1px 1px rgba(0,0,0,.25); font-size: 12px; }
.applybar .mac { width: 85px; gap: 7px; }

.layout { flex: 1; }
.picker { margin: 11px 11px 0 9px; height: 21px; display: grid; align-items: center; }
.picker select { grid-area: 1 / 1; width: 100%; height: 21px; border: 0; border-radius: 5px; background: #fff; padding: 0 12px; font-size: 13px; appearance: none; box-shadow: 0 0 1px rgba(0,0,0,.35), 0 1px 1px rgba(0,0,0,.25); }
.picker svg { grid-area: 1 / 1; justify-self: end; margin-right: 6px; pointer-events: none; }
.runrow { display: flex; align-items: center; justify-content: space-between; margin: 22px 6px 10px; height: 25px; }
.mac.off { width: 71px; height: 25px; background: #ececec; }
.props { flex: 1; margin: 0 6px 0 4px; background: #fff; border-bottom: 1px solid #0548cf; display: grid; place-items: center; color: #a2a2a2; font-size: 12px; }
.desc { height: 72px; margin: 7px 6px 0 4px; border-top: 1px solid #999; }
.presets { display: flex; align-items: center; padding: 0 3px 2px; color: #808080; }
.presets button { height: 18px; width: 41px; border: 1px solid #c3c3c3; background: #e6e6e6; color: #808080; }
.presets button:first-child { width: 76px; height: 20px; gap: 8px; }
.presets svg { align-self: flex-start; margin-top: 1px; }

/* graph */
.graph { display: flex; flex-direction: column; min-height: 0; background: #e2e2e2; }
.dragbar { display: flex; height: 28px; flex: none; background: #f5f5f5; }
.gp { background: #fff; }
.drag { width: 180px; background: #e2e2e2; display: flex; gap: 4px; padding: 4px 3px 4px 4px; line-height: 18px; }
.drag a { color: #1a41f0; }
.drag i { margin-left: auto; width: 1px; background: #777; }
.stage { flex: 1; min-height: 0; display: flex; }
.tools { width: 34px; flex: none; display: flex; flex-direction: column; }
.tools button { height: 30px; background: none; border: 0; }
.tools i { margin: 5px 4px; border-top: 1px dotted #777; }
.net { flex: 1; min-width: 0; height: 100%; background: #fff; }

.viewbar { height: 36px; flex: none; display: flex; align-items: center; padding: 0 10px 2px 5px; }
.viewbar .dots { height: 26px; margin: 0 5px 0 0; align-self: center; }
.viewbar .gap { margin: 0 13px 0 5px; }
.viewbar .gap2 { margin: 0 13px 0 12px; }
.viewbar .gap3 { margin: 0 5px 0 18px; }
.viewbar > svg { margin-right: 14px; }
.viewbar > .bigt { margin-right: 0; }
.viewbar > .eject { margin: 0 0 0 auto; }
.cell { height: 20px; width: 28px; border: 1px solid #a0a0a0; background: linear-gradient(#f0f0f0, #e2e2e2); margin-right: -1px; }
.cell.wide { width: 41px; gap: 6px; }
.cell.font { width: 103px; }
.cell.serif { font: bold 14px/16px "Liberation Serif", serif; gap: 2px; color: #333; }
.cell.blue { color: #3a5cc0; text-decoration: underline; }
input[type=range] { appearance: none; width: 72px; height: 18px; background: none; }
input[type=range]::-webkit-slider-runnable-track { height: 3px; border-radius: 2px; background: #aaa; }
input[type=range]::-webkit-slider-thumb { appearance: none; width: 16px; height: 16px; margin-top: -7px; border-radius: 50%; background: #fff; box-shadow: 0 0 2px rgba(0,0,0,.5); }
.r1 { margin-left: 10px; }
.r2 { margin: 0 14px 0 16px; }
.ink { width: 16px; height: 16px; background: #000; border: 0; }

/* context and statistics */
.context { height: 76px; flex: none; overflow: hidden; }
.facts { padding: 0 7px; font-size: 13px; line-height: 22px; margin-top: -4px; }
.facts b { margin-right: 6px; }
.context .head { z-index: 1; }
.stats { flex: 1; }
.settings { height: 19px; flex: none; border-bottom: 1px solid #777; padding-left: 1px; }
.settings button { height: 18px; width: 54px; border: 1px solid #b0b0b0; background: #f4f4f4; }
.list { flex: 1; background: #fff; padding-top: 10px; }
.list h2 { height: 20px; display: flex; align-items: center; gap: 5px; padding-left: 5px; background: #f7f7f7; border: solid #ccd6f0; border-width: 1px 0; font-size: 13px; }
.list li { height: 28px; display: flex; align-items: flex-start; padding: 2px 4px 0; font-size: 13px; line-height: 20px; }
.list span { flex: 1; }
.list button { width: 33px; height: 20px; border: 1px solid #b5b5b5; background: linear-gradient(#f0f0f0, #e4e4e4); font-size: 11px; }
.list .q { width: 28px; border-color: #ddd; border-left-width: 0; background: #f3f3f3; }

.status { height: 20px; flex: none; display: flex; align-items: center; justify-content: flex-end; padding: 2px 14px 0; background: linear-gradient(90deg, #f6f6f6 60px, rgba(246,246,246,0) 180px calc(100% - 190px), #f6f6f6 calc(100% - 90px)), linear-gradient(#f0f0f0, #d8d8d8); }

/* modularity dialog */
.dialog { position: absolute; left: 221px; top: 429px; width: 538px; border-radius: 10px; background: #eee; overflow: hidden; box-shadow: 0 0 1px rgba(0,0,0,.6), 0 18px 38px rgba(0,0,0,.48); font-size: 13px; }
.dlg-bar { position: relative; height: 28px; display: grid; place-items: center; padding-bottom: 1px; background: linear-gradient(#ececec, #d4d4d4); border-bottom: 1px solid #b0b0b0; }
.dlg-bar .lights { left: 8px; top: 8px; }
.dlg-head { height: 64px; padding: 12px; background: linear-gradient(90deg, #ededed, #d7d7d7); }
.dlg-head p { padding-left: 12px; }
.dlg-body { display: grid; grid-template-columns: 126px 1fr; row-gap: 22px; padding: 16px 20px 0; }
.dlg-body p { color: #6b6b6b; font-size: 12px; }
.dlg-body .two { line-height: 15px; }
.check { display: flex; align-items: center; gap: 6px; padding-left: 7px; white-space: nowrap; }
.check input { appearance: none; width: 14px; height: 14px; border-radius: 3px; background: linear-gradient(#3294ff, #0a74f5); display: grid; place-items: center; }
.check input::before { content: ""; width: 5px; height: 9px; margin-top: -2px; border: solid #fff; border-width: 0 2px 2px 0; transform: rotate(40deg); }
.check .focus { box-shadow: 0 0 0 2px #8fbdf0; }
.res input { display: block; width: 101px; height: 20px; margin: 8px 0 0 4px; border: 1px solid #ddd; border-bottom-color: #999; background: #fff; padding: 0 1px; }
.dlg-actions { display: flex; justify-content: flex-end; gap: 19px; padding: 49px 17px 15px; }
.dlg-actions .mac { width: 72px; padding-bottom: 1px; font-size: 13px; }
.dlg-actions .ok { background: linear-gradient(#2f95ff, #0a75fb); }

.marks { position: absolute; left: 0; top: 0; pointer-events: none; }
```
